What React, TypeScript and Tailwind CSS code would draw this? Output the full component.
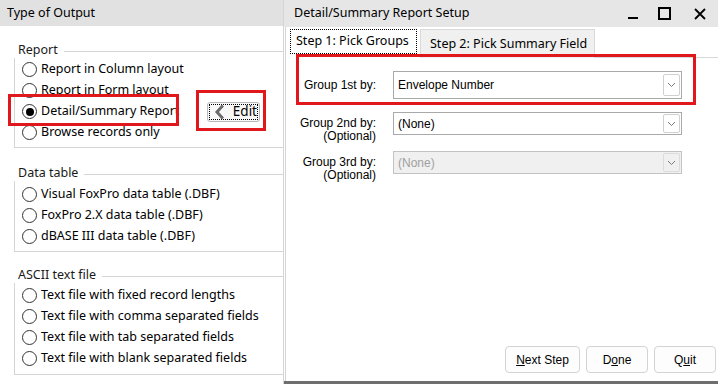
import React from "react";

type Item = { label: string; checked?: boolean };

const reportItems: Item[] = [
  { label: "Report in Column layout" },
  { label: "Report in Form layout" },
  { label: "Detail/Summary Report", checked: true },
  { label: "Browse records only" },
];

const tableItems: Item[] = [
  { label: "Visual FoxPro data table (.DBF)" },
  { label: "FoxPro 2.X data table (.DBF)" },
  { label: "dBASE III data table (.DBF)" },
];

const asciiItems: Item[] = [
  { label: "Text file with fixed record lengths" },
  { label: "Text file with comma separated fields" },
  { label: "Text file with tab separated fields" },
  { label: "Text file with blank separated fields" },
];

const Radio = ({ checked }: { checked?: boolean }) => (
  <span className="flex h-[15px] w-[15px] flex-none items-center justify-center rounded-full border border-[#333333] bg-white">
    {checked && <span className="h-[8px] w-[8px] rounded-full bg-black" />}
  </span>
);

const EditButton = () => (
  <button className="flex h-[20px] w-[53px] flex-none items-center rounded-[3px] border border-[#b9b9b9] bg-[#f8f8f8] p-[1px]">
    <span className="flex h-full w-full items-center border border-dotted border-black">
      <svg width="12" height="16" viewBox="0 0 12 16" className="ml-[4px]">
        <path d="M9 1.5 L3 8 L9 14.5" fill="none" stroke="#6b6b6b" strokeWidth="3" />
      </svg>
      <span className="ml-[7px] text-[13.5px] leading-none text-black">Edit</span>
    </span>
  </button>
);

const Group = ({
  title,
  items,
  headerClass,
  bodyClass,
  extra,
}: {
  title: string;
  items: Item[];
  headerClass: string;
  bodyClass: string;
  extra?: boolean;
}) => (
  <div className="ml-[14px]">
    <div className={`flex h-[16px] items-center ${headerClass}`}>
      <span className="pl-[4px] pr-[6px] text-[12.5px] leading-none text-[#1a1a1a]">{title}</span>
      <span className="mt-[2px] h-px flex-1 bg-[#d5d5d5]" />
    </div>
    <div className={`border-b border-l border-[#d5d5d5] ${bodyClass}`}>
      {items.map((item) => (
        <div key={item.label} className="flex h-[21px] items-center pl-[7px]">
          <Radio checked={item.checked} />
          <span className="ml-[4px] w-[166px] flex-none whitespace-nowrap text-[12.5px] leading-none text-black">
            {item.label}
          </span>
          {extra && item.checked && <EditButton />}
        </div>
      ))}
    </div>
  </div>
);

const Chevron = () => (
  <svg width="9" height="6" viewBox="0 0 9 6">
    <path d="M1 1 L4.5 4.5 L8 1" fill="none" stroke="#7a7a7a" strokeWidth="1" />
  </svg>
);

const Select = ({
  value,
  tall,
  disabled,
}: {
  value: string;
  tall?: boolean;
  disabled?: boolean;
}) => (
  <div
    className={`flex w-[289px] flex-none items-center justify-between border pl-[4px] pr-[1px] ${
      tall ? "h-[28px]" : "h-[23px]"
    } ${disabled ? "border-[#c3c3c3] bg-[#f0f0f0] text-[#a0a0a0]" : "border-[#a9a9a9] bg-white text-black"}`}
  >
    <span className="text-[12px] leading-none">{value}</span>
    <span
      className={`flex w-[17px] items-center justify-center rounded-[2px] border ${
        tall ? "h-[22px]" : "h-[19px]"
      } ${disabled ? "border-[#dcdcdc] bg-[#f0f0f0]" : "border-[#d0d0d0] bg-white"}`}
    >
      <Chevron />
    </span>
  </div>
);

const Btn = ({ w, children }: { w: string; children: React.ReactNode }) => (
  <button
    className={`flex h-[27px] ${w} items-center justify-center rounded-[4px] border border-[#d3d3d3] bg-[#fdfdfd] text-[12px] text-black`}
  >
    {children}
  </button>
);

const App = () => {
  return (
    <div
      className="relative flex h-[384px] w-[718px] overflow-hidden bg-white"
      style={{ fontFamily: '"Noto Sans", "Open Sans", sans-serif' }}
    >
      {/* Type of Output window */}
      <div className="flex w-[284px] flex-none flex-col border-r border-[#d4d4d4]">
        <div className="flex h-[26px] flex-none items-center bg-[#e1e1e1] pl-[7px] text-[12.5px] text-black">
          Type of Output
        </div>
        <div className="flex-1 bg-white">
          <Group title="Report" items={reportItems} headerClass="mt-[16px]" bodyClass="pt-[1px] pb-[4px]" extra />
          <Group title="Data table" items={tableItems} headerClass="mt-[17px]" bodyClass="pt-[3px] pb-[4px]" />
          <Group title="ASCII text file" items={asciiItems} headerClass="mt-[15px]" bodyClass="pt-[2px] pb-[5px]" />
        </div>
      </div>

      {/* Detail/Summary Report Setup window */}
      <div className="flex flex-1 flex-col border-b-[3px] border-[#6e6e6e]">
        <div className="flex h-[27px] flex-none items-center justify-between bg-[#e6e6e6] pl-[10px]">
          <span className="text-[12.5px] text-black">Detail/Summary Report Setup</span>
          <div className="flex items-center">
            <span className="mt-[9px] h-[2px] w-[10px] bg-black" />
            <span className="ml-[20px] h-[13px] w-[13px] border-2 border-black" />
            <svg width="12" height="12" viewBox="0 0 12 12" className="ml-[23px] mr-[12px]">
              <path d="M1 1 L11 11 M11 1 L1 11" stroke="#000" strokeWidth="1.8" />
            </svg>
          </div>
        </div>

        <div className="flex flex-1 flex-col pl-[1px]">
          <div className="flex flex-1 flex-col border-l border-[#d4d4d4]">
            {/* tabs */}
            <div className="flex h-[31px] flex-none items-end">
              <div className="flex h-full w-[134px] flex-none items-start bg-white pl-[4px] pt-[2px]">
                <span className="flex h-[25px] w-[127px] items-center border border-dotted border-black pl-[5px] text-[12.5px] text-black">
                  Step 1: Pick Groups
                </span>
              </div>
              <div className="flex h-[29px] w-[175px] flex-none items-center border-l border-r border-t border-[#d9d9d9] bg-[#f0f0f0] pl-[9px] text-[12.5px] text-black">
                Step 2: Pick Summary Field
              </div>
              <div className="h-px flex-1 bg-[#d9d9d9]" />
            </div>

            {/* tab panel */}
            <div
              className="flex flex-1 flex-col text-[12px] text-black"
              style={{ fontFamily: '"Liberation Sans", Arial, sans-serif' }}
            >
              <div className="mt-[13px] flex items-center">
                <span className="w-[90px] flex-none text-right leading-none">Group 1st by:</span>
                <span className="ml-[17px]">
                  <Select value="Envelope Number" tall />
                </span>
              </div>
              <div className="mt-[13px] flex h-[39px] items-start">
                <span className="w-[90px] flex-none pt-[5px] text-right leading-[13px]">
                  Group 2nd by:
                  <br />
                  (Optional)
                </span>
                <span className="ml-[17px]">
                  <Select value="(None)" />
                </span>
              </div>
              <div className="flex h-[39px] items-start">
                <span className="w-[90px] flex-none pt-[5px] text-right leading-[13px]">
                  Group 3rd by:
                  <br />
                  (Optional)
                </span>
                <span className="ml-[17px]">
                  <Select value="(None)" disabled />
                </span>
              </div>

              <div className="flex-1" />
              <div className="flex justify-end gap-[6px] pb-[8px] pr-[2px]">
                <Btn w="w-[75px]">
                  <span>
                    <u>N</u>ext Step
                  </span>
                </Btn>
                <Btn w="w-[62px]">
                  <span>
                    D<u>o</u>ne
                  </span>
                </Btn>
                <Btn w="w-[62px]">
                  <span>
                    Q<u>u</u>it
                  </span>
                </Btn>
              </div>
            </div>
          </div>
        </div>
      </div>

      {/* annotation boxes */}
      <div className="pointer-events-none absolute left-[8px] top-[94px] h-[32px] w-[171px] border-[3px] border-[#e0181b]" />
      <div className="pointer-events-none absolute left-[196px] top-[90px] h-[41px] w-[70px] border-[3px] border-[#e0181b]" />
      <div className="pointer-events-none absolute left-[296px] top-[54px] h-[51px] w-[400px] border-[3px] border-[#e0181b]" />
    </div>
  );
};

export default App;
